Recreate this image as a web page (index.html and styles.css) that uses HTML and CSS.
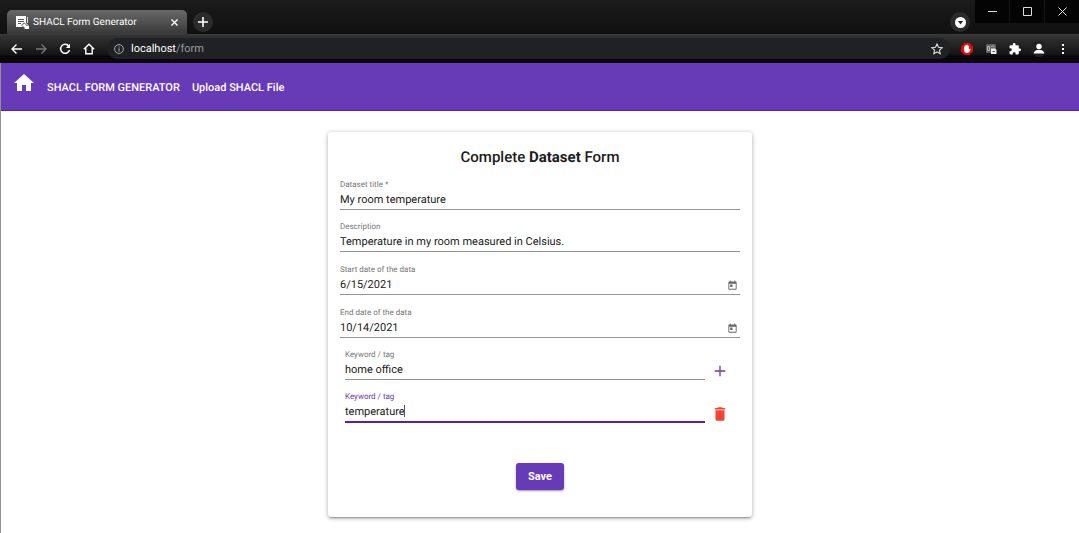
FILE: index.html
```html
<!DOCTYPE html>
<html lang="en">
<head>
<meta charset="utf-8">
<title>SHACL Form Generator</title>
<link rel="stylesheet" href="styles.css">
</head>
<body>
<header class="browser">
  <div class="tabstrip">
    <div class="tab">
      <svg class="favicon" viewBox="0 0 13 13"><path fill="#fff" d="M0 0h10v7l3 3v3H9l-1.500-2H0z"/><path d="M2 3.500h6M2 5.500h6M2 7.500h3" stroke="#555"/><path d="M5.500 9l3-2 3 3M6 9.500l2.500 2.500" stroke="#555" fill="none"/><path d="M11.500 1v6" stroke="#ddd"/></svg>
      <span class="tab-title">SHACL Form Generator</span>
      <button class="tab-close" aria-label="Close tab"><svg width="7" height="7" viewBox="0 0 7 7"><path d="M.5.500l6 6M6.500.500l-6 6" stroke="#fff" stroke-width="1.400"/></svg></button>
    </div>
    <button class="round new-tab" aria-label="New tab"><svg width="10" height="10" viewBox="0 0 10 10"><path d="M5 0v10M0 5h10" stroke="#fff" stroke-width="1.600"/></svg></button>
    <button class="round tab-search" aria-label="Search tabs"><svg width="11" height="11" viewBox="0 0 11 11"><circle cx="5.500" cy="5.500" r="5.500" fill="#fff"/><path d="M3 4h5L5.500 7.500z" fill="#222"/></svg></button>
    <div class="window-controls">
      <button aria-label="Minimize"><svg width="9" height="9" viewBox="0 0 9 9"><path d="M0 4.500h9" stroke="#ddd"/></svg></button>
      <button aria-label="Maximize"><svg width="9" height="9" viewBox="0 0 9 9"><path d="M.5.500h8v8h-8z" fill="none" stroke="#ddd"/></svg></button>
      <button aria-label="Close"><svg width="9" height="9" viewBox="0 0 9 9"><path d="M.5.500l8 8M8.500.500l-8 8" stroke="#ddd"/></svg></button>
    </div>
  </div>
  <div class="toolbar">
    <div class="nav-buttons">
      <button aria-label="Back"><svg width="12" height="12" viewBox="0 0 12 12" fill="none" stroke="#fff" stroke-width="1.400"><path d="M11 6H1.500M5.500 1.500L1 6l4.500 4.500"/></svg></button>
      <button aria-label="Forward"><svg width="12" height="12" viewBox="0 0 12 12" fill="none" stroke="#777" stroke-width="1.300"><path d="M1 6h9.500M6.500 1.500L11 6l-4.500 4.500"/></svg></button>
      <button aria-label="Reload"><svg width="12" height="12" viewBox="0 0 12 12"><path d="M9.800 3.200A4.500 4.500 0 1 0 10.500 7" fill="none" stroke="#fff" stroke-width="1.500"/><path d="M11 .8V5H6.800z" fill="#fff"/></svg></button>
      <button aria-label="Home"><svg width="12" height="12" viewBox="0 0 12 12"><path d="M.8 6.200L6 1.300l5.200 4.900M2.800 5v5.800h6.400V5" fill="none" stroke="#fff" stroke-width="1.400"/></svg></button>
    </div>
    <div class="omnibox">
      <svg width="10" height="10" viewBox="0 0 10 10"><circle cx="5" cy="5" r="4.400" fill="none" stroke="#aaa"/><path d="M5 4.300v3.200M5 2.400v1.100" stroke="#aaa" stroke-width="1.100"/></svg>
      <span class="url">localhost<span class="path">/form</span></span>
      <button class="star" aria-label="Bookmark"><svg width="12" height="12" viewBox="0 0 12 12"><path d="M6 1l1.500 3.300 3.600.400-2.700 2.400.8 3.600L6 8.900l-3.200 1.800.8-3.600L.9 4.700l3.600-.4z" fill="none" stroke="#ddd" stroke-width="1.100"/></svg></button>
    </div>
    <div class="extensions">
      <button aria-label="Ad blocker"><svg width="12" height="12" viewBox="0 0 12 12"><path d="M3.500 0h5L12 3.500v5L8.500 12h-5L0 8.500v-5z" fill="#e00b0b"/><path d="M3 6.500V3.600q.6-.8 1.200 0V2.500q.6-.8 1.200 0V2q.6-.8 1.300 0v.8q.6-.8 1.200 0v3.800l1-.9q.9-.1.800.5L8.200 9.300Q5.500 11 3.600 9z" fill="#fff"/></svg></button>
      <button aria-label="Extension"><svg width="12" height="12" viewBox="0 0 12 12"><rect x="1" y="1" width="10" height="9" rx="1" fill="#606060"/><path d="M2.500 3.500h2v4h-2zM6 3.500q2-1.500 3.500.5" fill="none" stroke="#b5b5b5"/><path d="M6 5.500h4l1.500 1.500v4H6z" fill="#eee"/><path d="M7.500 8.500h2.500" stroke="#555"/></svg></button>
      <button aria-label="Extensions"><svg width="12" height="12" viewBox="1 1 22 22"><path fill="#fff" d="M20.500 11H19V7a2 2 0 0 0-2-2h-4V3.500a2.500 2.500 0 0 0-5 0V5H4a2 2 0 0 0-2 2v3.800h1.500a2.700 2.700 0 0 1 0 5.400H2V20c0 1.100.9 2 2 2h3.800v-1.500a2.700 2.700 0 0 1 5.400 0V22H17a2 2 0 0 0 2-2v-4h1.500a2.500 2.500 0 0 0 0-5z"/></svg></button>
      <button class="profile" aria-label="Profile"><svg width="12" height="12" viewBox="0 0 11 11"><circle cx="5.500" cy="3.300" r="2.500" fill="#fff"/><path d="M.8 9.700V8.500Q2.500 6.300 5.500 6.300t4.700 2.200v1.200z" fill="#fff"/></svg></button>
      <button class="menu" aria-label="Menu"><svg width="4" height="10" viewBox="0 0 4 10"><path d="M1 0h2v2H1zM1 4h2v2H1zM1 8h2v2H1z" fill="#fff"/></svg></button>
    </div>
  </div>
</header>
<div class="page">
  <nav class="appbar">
    <a class="home" href="#" aria-label="Home"><svg width="22" height="22" viewBox="1 1 22 22"><path fill="#fff" d="M10 20v-6h4v6h5v-8h3L12 3 2 12h3v8z"/></svg></a>
    <a href="#">SHACL FORM GENERATOR</a>
    <a href="#">Upload SHACL File</a>
  </nav>
  <main>
    <form class="card">
      <h1>Complete <b>Dataset</b> Form</h1>
      <div class="fields">
        <div class="field"><label for="title">Dataset title *</label><div class="control"><input id="title" value="My room temperature"></div></div>
        <div class="field"><label for="desc">Description</label><div class="control"><input id="desc" value="Temperature in my room measured in Celsius."></div></div>
        <div class="field"><label for="start">Start date of the data</label><div class="control"><input id="start" value="6/15/2021"><button type="button" aria-label="Open calendar"><svg width="11" height="11" viewBox="0 0 24 24"><path fill="#666" d="M19 3h-1V1h-2v2H8V1H6v2H5a2 2 0 0 0-2 2v14a2 2 0 0 0 2 2h14a2 2 0 0 0 2-2V5a2 2 0 0 0-2-2zm0 16H5V8h14zM7 10h5v5H7z"/></svg></button></div></div>
        <div class="field"><label for="end">End date of the data</label><div class="control"><input id="end" value="10/14/2021"><button type="button" aria-label="Open calendar"><svg width="11" height="11" viewBox="0 0 24 24"><path fill="#666" d="M19 3h-1V1h-2v2H8V1H6v2H5a2 2 0 0 0-2 2v14a2 2 0 0 0 2 2h14a2 2 0 0 0 2-2V5a2 2 0 0 0-2-2zm0 16H5V8h14zM7 10h5v5H7z"/></svg></button></div></div>
        <div class="keyword">
          <div class="field"><label for="key1">Keyword / tag</label><div class="control"><input id="key1" value="home office"></div></div>
          <button type="button" aria-label="Add keyword"><svg width="16" height="16" viewBox="0 0 24 24"><path fill="#673ab7" d="M20 13h-7v7h-2v-7H4v-2h7V4h2v7h7z"/></svg></button>
        </div>
        <div class="keyword">
          <div class="field active"><label for="key2">Keyword / tag</label><div class="control"><input id="key2" value="temperature"><i class="caret"></i></div></div>
          <button type="button" aria-label="Delete keyword"><svg width="18" height="18" viewBox="0 0 24 24"><path fill="#f44336" d="M6 19c0 1.100.9 2 2 2h8a2 2 0 0 0 2-2V7H6zM19 4h-3.500l-1-1h-5l-1 1H5v2h14z"/></svg></button>
        </div>
      </div>
      <button class="save" type="button">Save</button>
    </form>
  </main>
</div>
</body>
</html>
```
FILE: styles.css
```css
* { box-sizing: border-box; }
body { margin: 0; min-height: 100vh; display: flex; flex-direction: column; background: #fff; font-family: Roboto, "Liberation Sans", sans-serif; font-size: 11px; text-rendering: geometricPrecision; }
button { padding: 0; border: 0; background: none; display: flex; align-items: center; justify-content: center; font: inherit; }
input { text-rendering: inherit; }
a { color: #fff; text-decoration: none; }
svg { display: block; flex: none; }

.browser { background: #161616; }
.tabstrip { height: 34px; display: flex; align-items: flex-end; background: linear-gradient(#1b1b1b, #101010); }
.tab { width: 180px; height: 24px; margin-left: 7px; padding: 0 9px; display: flex; align-items: center; gap: 4px; border-radius: 5px 5px 0 0; background: linear-gradient(#696969, #383838); color: #fff; font-size: 10px; }
.favicon { width: 13px; height: 13px; }
.tab-title { flex: 1; white-space: nowrap; }
.round { width: 20px; height: 20px; margin-bottom: 2px; border-radius: 50%; background: #2b2b2b; }
.new-tab { margin-left: 6px; }
.tab-search { margin-left: auto; }
.window-controls { align-self: flex-start; display: flex; gap: 1px; margin-left: 5px; }
.window-controls button { width: 34px; height: 23px; background: #040404; }

.toolbar { height: 29px; padding-bottom: 1px; display: flex; align-items: center; background: linear-gradient(#343434, #131313 20px, #080808 21px, #080808); border-top: 1px solid #3c3c3c; }
.nav-buttons { display: flex; gap: 12px; padding: 0 12px 0 11px; }
.omnibox { flex: 1; height: 21px; padding: 0 7px; display: flex; align-items: center; gap: 7px; border-radius: 11px; background: #202124; }
.url { color: #fff; font-size: 11px; }
.path { color: #9a9a9a; }
.star { margin-left: auto; }
.extensions { display: flex; align-items: center; gap: 12px; padding: 0 10px 0 11px; }
.profile { width: 16px; height: 16px; margin: 0 -2px; border-radius: 50%; background: #202124; }
.menu { width: 12px; }

.page { flex: 1; display: flex; flex-direction: column; border-left: 1px solid #929292; }
.appbar { height: 48px; padding: 1px 12px 0; display: flex; align-items: center; gap: 12px; background: #673ab7; border-bottom: 1px solid #5a1eac; font-weight: 500; }
.home { margin-bottom: 8px; }
main { padding: 21px 0 16px; display: flex; justify-content: center; }
.card { width: 424px; padding: 15px 12px 27px; display: flex; flex-direction: column; align-items: center; border-radius: 3px; box-shadow: 0 2px 2px -1px rgba(0,0,0,.3), 0 1px 5px rgba(0,0,0,.3); }
h1 { margin: 0; font-size: 15px; line-height: 20px; font-weight: 500; color: #1c1c1c; }
h1 b { font-weight: 700; }
.fields { align-self: stretch; min-height: 256px; display: grid; grid-auto-rows: 1fr; }
.field { align-self: end; border-bottom: 1px solid #949494; }
.field label { display: block; font-size: 8px; line-height: 10px; color: #767676; }
.control { position: relative; height: 19px; display: flex; align-items: center; }
.control input { flex: 1; min-width: 0; padding: 0; border: 0; outline: 0; background: none; font: inherit; color: #212121; }
.control button { width: 15px; height: 15px; margin-top: 2px; }
.keyword { padding: 0 12px 0 5px; display: flex; align-items: flex-end; gap: 7px; }
.keyword .field { flex: 1; }
.keyword > button { width: 16px; height: 18px; }
.active { border-bottom: 2px solid #5a1eac; }
.active label { color: #673ab7; }
.caret { position: absolute; left: 59px; top: 3px; width: 1px; height: 12px; background: #673ab7; }
.save { height: 27px; margin-top: 40px; padding: 0 12px; border-radius: 3px; background: #673ab7; color: #fff; font-weight: 700; box-shadow: 0 1px 2px rgba(0,0,0,.4); }
```
